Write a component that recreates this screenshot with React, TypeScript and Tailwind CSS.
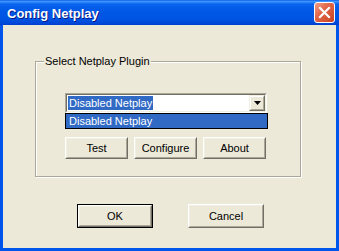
import React from "react";

const font = { fontFamily: '"Liberation Sans", Arial, sans-serif' };

function ClassicButton({
  label,
  w,
  h,
  isDefault,
}: {
  label: string;
  w: string;
  h: string;
  isDefault?: boolean;
}) {
  const inner = (
    <div className="h-full w-full border border-t-white border-l-white border-r-[#716f64] border-b-[#716f64]">
      <div className="flex h-full w-full items-center justify-center border border-t-[#f1efe2] border-l-[#f1efe2] border-r-[#aca899] border-b-[#aca899] bg-[#ece9d8] text-[11px] text-black">
        {label}
      </div>
    </div>
  );
  return (
    <div className={`${w} ${h} ${isDefault ? "border border-black" : ""}`}>{inner}</div>
  );
}

export default function App() {
  return (
    <div
      className="flex h-[251px] w-[339px] flex-col bg-[#0055ea] border-l-[#0a3fd0] border-r-[#0a3fd0] border-b-[#0831d9]"
      style={font}
    >
      {/* title bar */}
      <div className="flex h-[25px] shrink-0 items-center justify-between bg-[linear-gradient(180deg,#0a5fe8_0%,#3d95ff_6%,#0a64ee_16%,#0058e6_45%,#0054e3_75%,#0048d8_92%,#003fcf_100%)] pl-[7px] pr-[4px]">
        <span className="text-[13px] font-bold leading-none text-white [text-shadow:1px_1px_#0a1883] mt-[1px]">
          Config Netplay
        </span>
        <div className="flex h-[21px] w-[21px] items-center justify-center rounded-[3px] border border-white bg-[linear-gradient(135deg,#f0a088_0%,#e2674a_40%,#c9421f_100%)] mt-[-1px]">
          <svg width="13" height="13" viewBox="0 0 13 13">
            <path d="M2 2 L11 11 M11 2 L2 11" stroke="white" strokeWidth="2.2" strokeLinecap="square" />
          </svg>
        </div>
      </div>

      {/* body */}
      <div className="mx-[3px] mb-[3px] flex flex-1 flex-col bg-[#ece9d8]">
        {/* group box */}
        <div className="relative ml-[32px] mt-[36px] h-[116px] w-[266px] border border-[#aca899] shadow-[inset_1px_1px_0_#ffffff,1px_1px_0_#ffffff]">
          <span className="absolute left-[8px] top-[-8px] bg-[#ece9d8] px-[1px] text-[11px] leading-[14px] text-black">
            Select Netplay Plugin
          </span>
          <div className="flex flex-col pl-[29px] pt-[31px]">
            {/* combobox */}
            <div className="flex h-[20px] w-[202px] border border-t-[#aca899] border-l-[#aca899] border-r-white border-b-white">
              <div className="flex flex-1 items-center border border-t-[#716f64] border-l-[#716f64] border-r-[#f1efe2] border-b-[#f1efe2] bg-white pl-[1px] pr-[0px]">
                <div className="flex flex-1 items-center">
                  <span className="bg-[#316ac5] px-[1px] text-[11px] leading-[14px] text-white">
                    Disabled Netplay
                  </span>
                </div>
                <div className="h-[16px] w-[16px] border border-t-[#f1efe2] border-l-[#f1efe2] border-r-[#716f64] border-b-[#716f64]">
                  <div className="flex h-full w-full items-center justify-center border border-t-white border-l-white border-r-[#aca899] border-b-[#aca899] bg-[#ece9d8]">
                    <svg width="7" height="4" viewBox="0 0 7 4">
                      <path d="M0 0 H7 L3.5 4 Z" fill="black" />
                    </svg>
                  </div>
                </div>
              </div>
            </div>
            {/* list */}
            <div className="flex h-[16px] w-[203px] items-center border border-black bg-[#316ac5] pl-[3px] text-[11px] leading-[14px] text-white">
              Disabled Netplay
            </div>
            {/* buttons */}
            <div className="mt-[8px] flex gap-[6px]">
              <ClassicButton label="Test" w="w-[63px]" h="h-[22px]" />
              <ClassicButton label="Configure" w="w-[63px]" h="h-[22px]" />
              <ClassicButton label="About" w="w-[63px]" h="h-[22px]" />
            </div>
          </div>
        </div>

        {/* bottom buttons */}
        <div className="ml-[74px] mt-[27px] flex gap-[35px]">
          <ClassicButton label="OK" w="w-[76px]" h="h-[24px]" isDefault />
          <ClassicButton label="Cancel" w="w-[76px]" h="h-[24px]" />
        </div>
      </div>
    </div>
  );
}
